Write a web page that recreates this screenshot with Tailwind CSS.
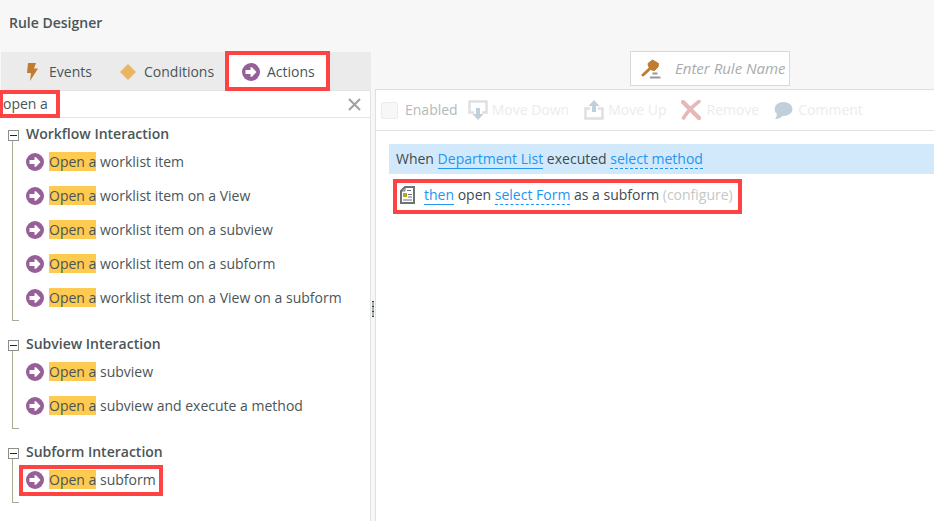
<!DOCTYPE html>
<html lang="en">
<head>
  <meta charset="UTF-8" />
  <meta name="viewport" content="width=device-width, initial-scale=1.0"/>
  <title>Rule Designer</title>
  <script src="https://cdn.jsdelivr.net/npm/@tailwindcss/browser@4"></script>
</head>
<body class="h-screen flex flex-col overflow-hidden bg-[#f7f7f7] font-['Open_Sans',sans-serif] text-sm text-[#4a5557]">
  <!-- shared icon -->
  <svg class="hidden">
    <symbol id="action" viewBox="0 0 18 18">
      <circle cx="9" cy="9" r="9" fill="#965f98"/>
      <path d="M3.500 7h5V4.200h1.500L14.500 9 10 13.800H8.500V11h-5z" fill="#fff"/>
    </symbol>
  </svg>

  <header class="h-[52px] shrink-0 px-[9px] pt-[13px]">
    <h1 class="font-semibold leading-5">Rule Designer</h1>
  </header>

  <div class="flex flex-1 min-h-0">
    <!-- left: rule library -->
    <aside class="w-[371px] shrink-0 flex flex-col">
      <div class="h-[38px] shrink-0 flex bg-[#ebebeb] ml-px pl-[14px]">
        <button type="button" class="w-[97px] flex items-center gap-2 pl-2 pt-0.5">
          <svg class="size-[18px]" viewBox="0 0 18 18"><path d="M5 0h8l-2 5.500h4L7 18l1-8H4z" fill="#c07c30"/></svg>
          Events
        </button>
        <button type="button" class="w-[117px] flex items-center gap-2 pl-2 pt-0.5">
          <svg class="size-4" viewBox="0 0 16 16"><path d="M8 .5L15.500 8 8 15.500.5 8z" fill="#e9b565" stroke="#e9b565" stroke-linejoin="round"/></svg>
          Conditions
        </button>
        <button type="button" class="relative w-[97px] flex items-center gap-[7px] pl-[13px] pt-0.5 bg-white">
          <svg class="size-[18px]"><use href="#action"/></svg>
          Actions
          <span class="absolute -inset-x-1 -inset-y-px border-4 border-[#ff4343] z-10"></span>
        </button>
      </div>

      <div class="relative h-[28px] shrink-0 flex items-center bg-white border-y border-r border-[#e4e4e4]">
        <input type="text" value="open a" aria-label="Search rules" class="flex-1 min-w-0 pl-[3px] outline-none" />
        <button type="button" aria-label="Clear search" class="mr-[9px]">
          <svg class="size-[13px]" viewBox="0 0 13 13"><path d="M1 1l11 11M12 1L1 12" stroke="#9fa1a1" stroke-width="2"/></svg>
        </button>
        <span class="absolute -left-px -inset-y-px w-[61px] border-4 border-[#ff4343] pointer-events-none"></span>
      </div>

      <div class="flex-1 min-h-0 bg-white border-r border-[#e4e4e4] pt-[5px] pl-2">
        <section class="relative pb-[18px]">
          <span class="absolute left-1 top-[17px] bottom-3 w-[7px] border-l border-b border-[#a9ac93]"></span>
          <h2 class="h-[22px] flex items-center gap-[7px] font-semibold">
            <button type="button" aria-label="Collapse Workflow Interaction" class="relative top-px size-[11px] border border-[#8b8e8b] bg-white flex items-center justify-center"><span class="w-[7px] h-px bg-[#222]"></span></button>
            Workflow Interaction
          </h2>
          <ul class="pl-[18px]">
            <li><button type="button" class="h-[34px] flex items-center gap-[5px]"><svg class="size-[18px]"><use href="#action"/></svg><span><mark class="bg-[#fdca52] text-inherit">Open a</mark> worklist item</span></button></li>
            <li><button type="button" class="h-[34px] flex items-center gap-[5px]"><svg class="size-[18px]"><use href="#action"/></svg><span><mark class="bg-[#fdca52] text-inherit">Open a</mark> worklist item on a View</span></button></li>
            <li><button type="button" class="h-[34px] flex items-center gap-[5px]"><svg class="size-[18px]"><use href="#action"/></svg><span><mark class="bg-[#fdca52] text-inherit">Open a</mark> worklist item on a subview</span></button></li>
            <li><button type="button" class="h-[34px] flex items-center gap-[5px]"><svg class="size-[18px]"><use href="#action"/></svg><span><mark class="bg-[#fdca52] text-inherit">Open a</mark> worklist item on a subform</span></button></li>
            <li><button type="button" class="h-[34px] flex items-center gap-[5px]"><svg class="size-[18px]"><use href="#action"/></svg><span><mark class="bg-[#fdca52] text-inherit">Open a</mark> worklist item on a View on a subform</span></button></li>
          </ul>
        </section>

        <section class="relative pb-[18px]">
          <span class="absolute left-1 top-[17px] bottom-3 w-[7px] border-l border-b border-[#a9ac93]"></span>
          <h2 class="h-[22px] flex items-center gap-[7px] font-semibold">
            <button type="button" aria-label="Collapse Subview Interaction" class="relative top-px size-[11px] border border-[#8b8e8b] bg-white flex items-center justify-center"><span class="w-[7px] h-px bg-[#222]"></span></button>
            Subview Interaction
          </h2>
          <ul class="pl-[18px]">
            <li><button type="button" class="h-[34px] flex items-center gap-[5px]"><svg class="size-[18px]"><use href="#action"/></svg><span><mark class="bg-[#fdca52] text-inherit">Open a</mark> subview</span></button></li>
            <li><button type="button" class="h-[34px] flex items-center gap-[5px]"><svg class="size-[18px]"><use href="#action"/></svg><span><mark class="bg-[#fdca52] text-inherit">Open a</mark> subview and execute a method</span></button></li>
          </ul>
        </section>

        <section class="relative pb-[18px]">
          <span class="absolute left-1 top-[17px] bottom-3 w-[7px] border-l border-b border-[#a9ac93]"></span>
          <h2 class="h-[22px] flex items-center gap-[7px] font-semibold">
            <button type="button" aria-label="Collapse Subform Interaction" class="relative top-px size-[11px] border border-[#8b8e8b] bg-white flex items-center justify-center"><span class="w-[7px] h-px bg-[#222]"></span></button>
            Subform Interaction
          </h2>
          <ul class="pl-[18px]">
            <li>
              <button type="button" class="relative h-[34px] flex items-center gap-[5px]">
                <svg class="size-[18px]"><use href="#action"/></svg><span><mark class="bg-[#fdca52] text-inherit">Open a</mark> subform</span>
                <span class="absolute -inset-x-[7px] top-0.5 bottom-px border-4 border-[#ff4343]"></span>
              </button>
            </li>
          </ul>
        </section>
      </div>
    </aside>

    <!-- splitter handle -->
    <div class="w-1 shrink-0 flex flex-col items-center pt-[249px]">
      <svg class="w-0.5 h-4" viewBox="0 0 2 16"><path d="M1 0v16" stroke="#a4adb0" stroke-width="2"/><path d="M1 0v16" stroke="#333e42" stroke-width="2" stroke-dasharray="1 4"/></svg>
    </div>

    <!-- right: rule definition -->
    <main class="flex-1 min-w-0 flex flex-col">
      <div class="h-[37px] shrink-0 flex justify-end pr-36">
        <label class="relative -top-px w-40 h-[35px] flex items-center bg-white border border-[#d9d9d9] pl-[10px] pr-1">
          <svg class="w-5 h-5 shrink-0" viewBox="0 0 20 20">
            <path d="M2 16L9 9.500" stroke="#c07c30" stroke-width="3" stroke-linecap="round"/>
            <path d="M7 4.500L11.500 1 17.500 4.500 17 8 13.500 11.500 10.500 11 7.500 7.500z" fill="#c07c30" stroke="#c07c30" stroke-linejoin="round"/>
            <path d="M11.500 14.500h5M9 18.500h10.500" stroke="#979797" stroke-width="2"/>
          </svg>
          <input type="text" placeholder="Enter Rule Name" aria-label="Rule name" class="flex-1 min-w-0 ml-[14px] text-[15px] italic outline-none placeholder:text-[#a9adad]" />
        </label>
      </div>

      <div class="flex-1 min-h-0 bg-white border-l border-t border-[#e0e0e0]">
        <div class="h-[41px] flex items-center pl-[5px] border-b border-[#e0e0e0] text-[#ececec] whitespace-nowrap">
          <label class="flex items-center gap-[7px] text-[#b4b9b9] mr-[10px]">
            <input type="checkbox" disabled class="appearance-none size-[17px] rounded-xs border border-[#ececec] bg-[#f7f7f7]" />
            Enabled
          </label>
          <button type="button" disabled class="flex items-center gap-1 mr-[15px]">
            <svg class="size-5" viewBox="0 0 20 20"><path d="M6 12.500H1.500v-11h17v11H14" fill="none" stroke="#e0e0e0" stroke-width="2.500"/><path d="M8 8h4v6h3.500L10 20l-5.500-6H8z" fill="#bfd0da"/></svg>
            Move Down
          </button>
          <button type="button" disabled class="flex items-center gap-1 mr-[15px]">
            <svg class="size-5" viewBox="0 0 20 20"><path d="M6 8.500H1.500v10h17v-10H14" fill="none" stroke="#e0e0e0" stroke-width="2.500"/><path d="M8 12h4V6h3.500L10 0 4.500 6H8z" fill="#bfd0da"/></svg>
            Move Up
          </button>
          <button type="button" disabled class="flex items-center gap-[5px] mr-[15px]">
            <svg class="size-5" viewBox="0 0 20 20"><path d="M2 2l16 16" stroke="#e6b9b9" stroke-width="4.500" stroke-linecap="round"/><path d="M18 1.500Q8 9 2.500 18" fill="none" stroke="#e6b9b9" stroke-width="3.500" stroke-linecap="round"/></svg>
            Remove
          </button>
          <button type="button" disabled class="flex items-center gap-[5px]">
            <svg class="size-[19px]" viewBox="0 0 19 19"><ellipse cx="9.500" cy="8" rx="9" ry="7" fill="#bfd0da"/><path d="M3 12q0 4-2 6 6 0 8-4z" fill="#bfd0da"/></svg>
            Comment
          </button>
        </div>

        <div class="pl-[13px] pt-[13px] whitespace-nowrap">
          <p class="h-[30px] flex items-center bg-[#d2e9fc] pl-[7px] text-[#3f4b4e]">
            <span>When <a href="#" class="inline-block h-5 leading-5 border-b border-[#2196f3] text-[#2196f3]">Department List</a> executed <a href="#" class="inline-block h-5 leading-5 border-b border-dashed border-[#2196f3] text-[#2196f3]">select method</a></span>
          </p>
          <div class="w-fit ml-1 mt-[5px] h-[35px] flex items-center gap-2 border-4 border-[#ff4343] pl-[3px] pr-[5px] pb-[3px] text-[#3f4b4e]">
            <svg class="w-4 h-[18px]" viewBox="0 0 16 18">
              <path d="M5 1h9v16H1V5z" fill="#fff" stroke="#6b7376" stroke-width="2"/>
              <path d="M5 1v4H1" fill="none" stroke="#6b7376"/>
              <path d="M3 7h4v4H3z" fill="#b2ab1b"/>
              <path d="M7 4.500h4M8 8.500h4M8 11h4M3 14h9" stroke="#6b7376"/>
            </svg>
            <span><a href="#" class="inline-block h-5 leading-5 border-b border-[#2196f3] text-[#2196f3]">then</a> open <a href="#" class="inline-block h-5 leading-5 border-b border-dashed border-[#2196f3] text-[#2196f3]">select Form</a> as a subform <span class="text-[#c4c8c8]">(configure)</span></span>
          </div>
        </div>
      </div>
    </main>
  </div>
</body>
</html>
